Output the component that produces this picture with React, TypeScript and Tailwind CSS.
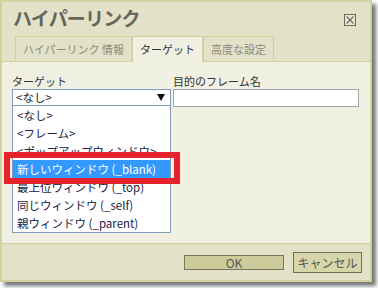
import React from "react";

const items = [
  "<なし>",
  "<フレーム>",
  "<ポップアップウィンドウ>",
  "新しいウィンドウ (_blank)",
  "最上位ウィンドウ (_top)",
  "同じウィンドウ (_self)",
  "親ウィンドウ (_parent)",
];

export default function App() {
  return (
    <div className="relative w-[378px] h-[288px] bg-white overflow-hidden font-['Noto_Sans_CJK_JP',sans-serif]">
      <div className="w-[372px] h-[282px] border-2 border-[#d3d19f] bg-[#e3e2c9] shadow-[4px_4px_4px_rgba(0,0,0,0.55)] flex flex-col">
        {/* title */}
        <div className="h-[34px] flex items-start justify-between pl-[11px] pr-[14px] pt-[3px]">
          <div className="text-[19px] leading-[26px] font-bold text-[#66665a] tracking-[-0.8px]">ハイパーリンク</div>
          <div className="mt-[9px] w-[12px] h-[12px] border border-[#6a6a5c] bg-[#e9e8d2] flex items-center justify-center">
            <svg width="10" height="10" viewBox="0 0 10 10">
              <path d="M1.5 1.5 L8.5 8.5 M8.5 1.5 L1.5 8.5" stroke="#6a6a5c" strokeWidth="1.2" />
            </svg>
          </div>
        </div>
        {/* tabs */}
        <div className="h-[26px] flex items-stretch pl-[13px] relative z-10 -mb-px">
          <div className="px-[7px] border border-[#d3d19f] bg-[#e3e2c9] text-[11px] leading-[24px] text-[#8a8a7a]">
            ハイパーリンク 情報
          </div>
          <div className="px-[7px] border border-b-0 border-[#d3d19f] bg-[#f0f0e3] text-[11px] leading-[24px] text-[#333]">
            ターゲット
          </div>
          <div className="px-[7px] border border-[#d3d19f] bg-[#e3e2c9] text-[11px] leading-[24px] text-[#8a8a7a]">
            高度な設定
          </div>
        </div>
        {/* panel */}
        <div className="flex-1 bg-[#f0f0e3] border-t border-[#d3d19f] pl-[10px] pt-[11px]">
          <div className="flex gap-[2px]">
            <div className="w-[159px] flex flex-col">
              <div className="text-[11px] leading-[16px] text-[#333]">ターゲット</div>
              <div className="h-[17px] border border-[#7f9db9] bg-white flex items-center justify-between pl-[3px] pr-[5px]">
                <span className="text-[11.5px] leading-[15px] text-[#222]">&lt;なし&gt;</span>
                <svg width="8" height="7" viewBox="0 0 8 7">
                  <path d="M0 0 H8 L4 7 Z" fill="#111" />
                </svg>
              </div>
              <div className="border border-t-0 border-[#7f9db9] bg-white flex flex-col">
                {items.map((t, i) => (
                  <div
                    key={i}
                    className={
                      i === 3
                        ? "h-[18px] bg-[#3399ff] text-white text-[11.5px] leading-[18px] pl-[4px] whitespace-nowrap"
                        : "h-[18px] text-[#222244] text-[11.5px] leading-[18px] pl-[4px] whitespace-nowrap"
                    }
                  >
                    {t}
                  </div>
                ))}
              </div>
            </div>
            <div className="w-[186px] flex flex-col">
              <div className="text-[11px] leading-[16px] text-[#333]">目的のフレーム名</div>
              <div className="h-[18px] border border-[#a5a5a5] bg-white" />
            </div>
          </div>
        </div>
        {/* footer */}
        <div className="h-[37px] border-t border-[#d3d19f] flex items-center justify-end gap-[9px] pr-[8px]">
          <div className="w-[100px] h-[15px] border border-[#77775e] bg-[#cdcb9c] text-[12px] leading-[13px] text-[#555] text-center">
            OK
          </div>
          <div className="w-[69px] h-[21px] border border-[#6d6d58] bg-[#d7d5aa] text-[12px] leading-[19px] text-[#555] text-center">
            キャンセル
          </div>
        </div>
      </div>
      {/* red highlight box */}
      <div className="absolute left-[4px] top-[152px] w-[176px] h-[32px] border-[6px] border-[#e8222a]" />
    </div>
  );
}
